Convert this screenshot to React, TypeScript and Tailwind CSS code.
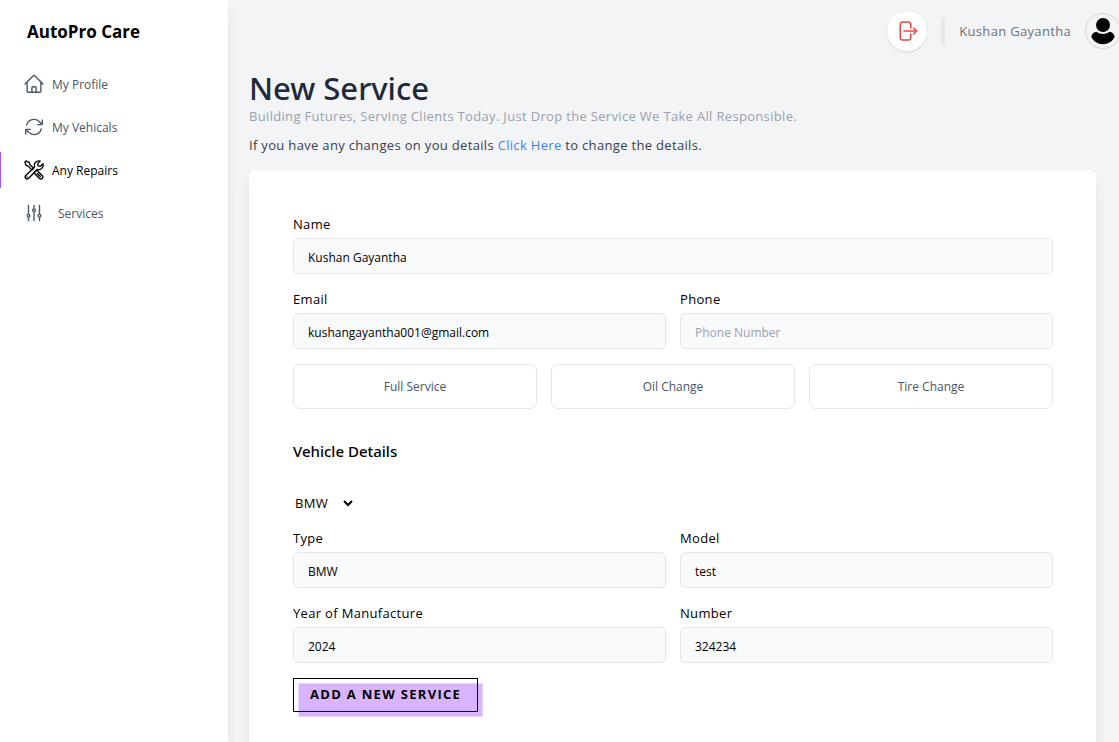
import { useState, type ReactNode } from "react";
import {
  HiOutlineHome,
  HiOutlineArrowPath,
  HiOutlineAdjustmentsVertical,
  HiOutlineArrowRightOnRectangle,
} from "react-icons/hi2";

function ToolsIcon() {
  return (
    <svg viewBox="1 1 22 22" className="size-5" fill="none" stroke="currentColor" strokeWidth="1.5" strokeLinejoin="round" strokeLinecap="round" aria-hidden="true">
      <path d="M2 3.200 3.200 2l3.400 1.600 1 2.600 4 4-1.800 1.800-4-4-2.400-1Z" />
      <path d="m12.600 14.200 2.200-2.200 6.400 6.200a2.200 2.200 0 0 1-3.100 3.100l-6.200-6.200Z" />
      <path d="m15.600 15.800 3.400 3.400" />
      <path d="M21.800 5.200 19 8l-2.400-.6L16 5l2.800-2.800a5 5 0 0 0-6.200 6.400l-9.900 9.600a2.300 2.300 0 0 0 3.200 3.200l9.600-10a5 5 0 0 0 6.300-6.200Z" />
      <path d="M4.400 19.600h.1" />
    </svg>
  );
}

function AvatarIcon() {
  return (
    <svg viewBox="0 0 24 28" className="h-7 w-6" fill="currentColor" aria-hidden="true">
      <circle cx="12" cy="8" r="7" />
      <path d="M5.600 14.800C2.800 15.200.9 16.800.3 19.800 2.600 24.500 6.800 27.200 12 27.200s9.400-2.700 11.700-7.400c-.6-3-2.500-4.600-5.300-5-1.800 1.500-3.900 2.200-6.400 2.200s-4.600-.7-6.400-2.200Z" />
    </svg>
  );
}

function NavItem({ icon, label, active = false, wide = false }: { icon: ReactNode; label: string; active?: boolean; wide?: boolean }) {
  return (
    <li>
      <a
        href="#"
        aria-current={active ? "page" : undefined}
        className={`flex h-9 items-center border-l pl-[22px] text-xs ${active ? "border-[#a855f7] text-black" : "border-transparent text-gray-600"}`}
      >
        <span className={`flex w-[22px] justify-center ${wide ? "mr-[13px]" : "mr-[7px]"}`}>{icon}</span>
        <span className="pt-px">{label}</span>
      </a>
    </li>
  );
}

function Field({ id, label, value = "", placeholder, type = "text" }: { id: string; label: string; value?: string; placeholder?: string; type?: string }) {
  return (
    <div className="flex min-w-0 flex-col gap-1">
      <label htmlFor={id} className="text-[13px] leading-5 tracking-wide">{label}</label>
      <input
        id={id}
        type={type}
        defaultValue={value}
        placeholder={placeholder}
        className="h-9 w-full rounded-[5px] border border-gray-200 bg-gray-50 px-[14px] pt-0.5 text-xs placeholder:text-gray-400"
      />
    </div>
  );
}

const services = ["Full Service", "Oil Change", "Tire Change"];

export default function App() {
  const [service, setService] = useState("");
  return (
    <div className="flex h-screen overflow-hidden bg-gray-100 font-['Open_Sans',sans-serif] text-black">
      <aside className="z-10 w-[228px] shrink-0 bg-white shadow-lg">
        <h2 className="pt-5 pl-[27px] text-[17px] leading-6 font-bold">AutoPro Care</h2>
        <nav className="pt-[22px]">
          <ul className="flex flex-col gap-[7px]">
            <NavItem icon={<HiOutlineHome className="size-[22px]" />} label="My Profile" />
            <NavItem icon={<HiOutlineArrowPath className="size-[22px]" />} label="My Vehicals" />
            <NavItem icon={<ToolsIcon />} label="Any Repairs" active />
            <NavItem icon={<HiOutlineAdjustmentsVertical className="size-[22px]" />} label="Services" wide />
          </ul>
        </nav>
      </aside>

      <div className="flex min-w-0 flex-1 flex-col">
        <header className="-mr-0.5 flex shrink-0 items-center justify-end pt-[11px]">
          <button type="button" aria-label="Log out" className="flex size-10 items-center justify-center rounded-full bg-white text-[#ef4444] shadow-sm">
            <HiOutlineArrowRightOnRectangle className="size-6" />
          </button>
          <span className="ml-[14px] h-[29px] w-1 rounded-sm bg-gray-200" />
          <span className="ml-[14px] text-[13px] leading-5 tracking-wide text-gray-500">Kushan Gayantha</span>
          <button type="button" aria-label="Account" className="ml-[14px] flex size-9 shrink-0 items-center justify-center rounded-full border border-gray-300">
            <AvatarIcon />
          </button>
        </header>

        <main className="flex min-h-0 flex-1 flex-col pt-[19px] pr-[23px] pl-[21px]">
          <h1 className="font-['Noto_Sans',sans-serif] text-[31px] leading-9 font-medium text-gray-800">New Service</h1>
          <p className="text-[13px] leading-5 tracking-wide text-gray-400">Building Futures, Serving Clients Today. Just Drop the Service We Take All Responsible.</p>
          <p className="mt-[9px] text-[13px] leading-5 tracking-wide text-gray-700">
            If you have any changes on you details <a href="#" className="text-[#3b82f6]">Click Here</a> to change the details.
          </p>

          <form className="mt-[15px] flex flex-1 flex-col gap-[15px] rounded-[7px] bg-white py-11 pr-[43px] pl-11 shadow-lg" onSubmit={(e) => e.preventDefault()}>
            <Field id="name" label="Name" value="Kushan Gayantha" />
            <div className="grid grid-cols-2 gap-[14px]">
              <Field id="email" label="Email" type="email" value="kushangayantha001@gmail.com" />
              <Field id="phone" label="Phone" type="tel" placeholder="Phone Number" />
            </div>
            <div className="grid grid-cols-3 gap-[14px]">
              {services.map((name) => (
                <button
                  key={name}
                  type="button"
                  aria-pressed={service === name}
                  onClick={() => setService(name)}
                  className="h-[45px] rounded-[7px] border border-gray-200 pt-px text-xs text-gray-600"
                >
                  {name}
                </button>
              ))}
            </div>
            <h2 className="mt-[15px] font-['Noto_Sans',sans-serif] text-[15px] leading-6 font-medium">Vehicle Details</h2>
            <select aria-label="Vehicle" className="mt-[15px] -ml-0.5 w-[65px] self-start bg-white text-[13px] leading-5 tracking-wide" defaultValue="BMW">
              <option>BMW</option>
            </select>
            <div className="grid grid-cols-2 gap-x-[14px] gap-y-[15px]">
              <Field id="type" label="Type" value="BMW" />
              <Field id="model" label="Model" value="test" />
              <Field id="year" label="Year of Manufacture" value="2024" />
              <Field id="number" label="Number" value="324234" />
            </div>
            <button
              type="submit"
              className="relative isolate h-[34px] shrink-0 self-start px-[17px] text-[13px] font-bold tracking-widest uppercase"
            >
              <span className="absolute inset-0 -z-10 translate-x-[5px] translate-y-[5px] border border-[#e9d5ff] bg-[#d8b4fe]" />
              <span className="absolute inset-0 border border-black" />
              Add a new service
            </button>
          </form>
        </main>
      </div>
    </div>
  );
}
